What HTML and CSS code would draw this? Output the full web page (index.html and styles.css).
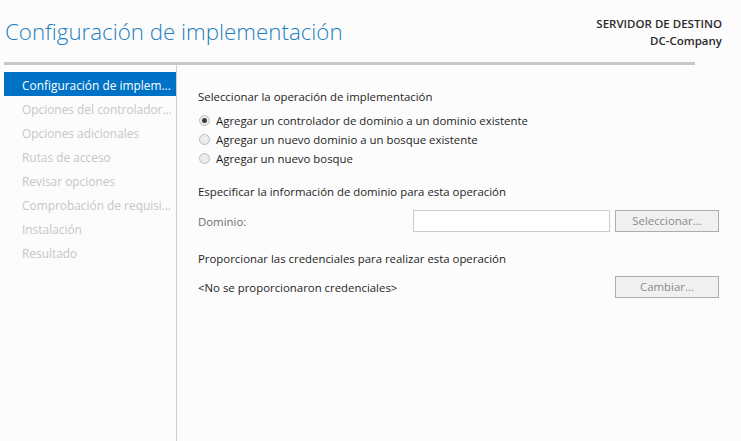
FILE: index.html
```html
<!DOCTYPE html>
<html lang="es">
<head>
<meta charset="utf-8">
<title>Configuración de implementación</title>
<link rel="stylesheet" href="styles.css">
</head>
<body>
<div class="window">
  <header class="header">
    <h1 class="title">Configuración de implementación</h1>
    <div class="target">
      <div class="target-label">SERVIDOR DE DESTINO</div>
      <div class="target-name">DC-Company</div>
    </div>
  </header>
  <div class="rule"></div>
  <div class="main">
    <nav class="sidebar">
      <div class="nav-item active">Configuración de implem...</div>
      <div class="nav-item">Opciones del controlador...</div>
      <div class="nav-item">Opciones adicionales</div>
      <div class="nav-item">Rutas de acceso</div>
      <div class="nav-item">Revisar opciones</div>
      <div class="nav-item">Comprobación de requisi...</div>
      <div class="nav-item">Instalación</div>
      <div class="nav-item">Resultado</div>
    </nav>
    <section class="content">
      <div class="heading h-first">Seleccionar la operación de implementación</div>
      <div class="radios">
        <div class="radio-row"><span class="radio checked"></span><span>Agregar un controlador de dominio a un dominio existente</span></div>
        <div class="radio-row"><span class="radio"></span><span>Agregar un nuevo dominio a un bosque existente</span></div>
        <div class="radio-row"><span class="radio"></span><span>Agregar un nuevo bosque</span></div>
      </div>
      <div class="heading h-second">Especificar la información de dominio para esta operación</div>
      <div class="field-row domain-row">
        <span class="field-label">Dominio:</span>
        <span class="input"></span>
        <span class="button">Seleccionar...</span>
      </div>
      <div class="heading h-third">Proporcionar las credenciales para realizar esta operación</div>
      <div class="field-row cred-row">
        <span class="cred-text">&lt;No se proporcionaron credenciales&gt;</span>
        <span class="button">Cambiar...</span>
      </div>
    </section>
  </div>
</div>
</body>
</html>
```
FILE: styles.css
```css
html, body {
  margin: 0;
  padding: 0;
  background: #fcfcfc;
}
body {
  font-family: "Open Sans", "Noto Sans", "Liberation Sans", sans-serif;
  color: #1e1e1e;
}
.window {
  width: 741px;
  height: 441px;
  display: flex;
  flex-direction: column;
  overflow: hidden;
}
.header {
  height: 62px;
  display: flex;
  justify-content: space-between;
  align-items: flex-start;
  box-sizing: border-box;
}
.title {
  margin: 15px 0 0 5px;
  font-size: 22.3px;
  font-weight: 300;
  color: #1f7fbf;
  line-height: 34px;
}
.target {
  margin: 15px 19px 0 0;
  text-align: right;
  font-size: 11.5px;
  font-weight: 600;
  line-height: 17px;
  color: #2a2a2a;
}
.rule {
  margin-left: 4px;
  width: 691px;
  height: 3px;
  background: #c8c8c8;
}
.main {
  flex: 1;
  display: flex;
}
.sidebar {
  width: 172px;
  margin-left: 4px;
  padding-top: 7px;
  border-right: 1px solid #cfcfcf;
  font-size: 11.9px;
}
.nav-item {
  height: 22px;
  padding-top: 2px;
  line-height: 22px;
  padding-left: 18px;
  color: #c6c6c6;
  white-space: nowrap;
}
.nav-item.active {
  background: #0072c6;
  color: #ffffff;
}
.content {
  width: 521px;
  margin-left: 21px;
  font-size: 11.4px;
  color: #1e1e1e;
}
.heading {
  line-height: 16px;
  height: 16px;
}
.h-first { margin-top: 24px; }
.h-second { margin-top: 16px; }
.h-third { margin-top: 19px; }
.radios {
  margin-top: 6px;
}
.radio-row {
  height: 19px;
  display: flex;
  align-items: center;
  gap: 6px;
}
.radio {
  width: 9px;
  height: 9px;
  border-radius: 50%;
  border: 1px solid #bdbdbd;
  background: #ececec;
  margin-left: 1px;
  position: relative;
  flex: none;
}
.radio.checked::after {
  content: "";
  position: absolute;
  left: 2px;
  top: 2px;
  width: 5px;
  height: 5px;
  border-radius: 50%;
  background: #3c3c3c;
}
.field-row {
  height: 22px;
  display: flex;
  align-items: center;
}
.domain-row { margin-top: 10px; }
.cred-row { margin-top: 9px; }
.field-label {
  flex: 1;
  color: #6d6d6d;
}
.cred-text {
  flex: 1;
}
.input {
  width: 195px;
  height: 20px;
  border: 1px solid #cccccc;
  background: #ffffff;
  margin-right: 5px;
}
.button {
  width: 102px;
  height: 20px;
  border: 1px solid #adadad;
  background: #f0f0f0;
  color: #8a8a8a;
  text-align: center;
  line-height: 20px;
  box-sizing: content-box;
}
```
